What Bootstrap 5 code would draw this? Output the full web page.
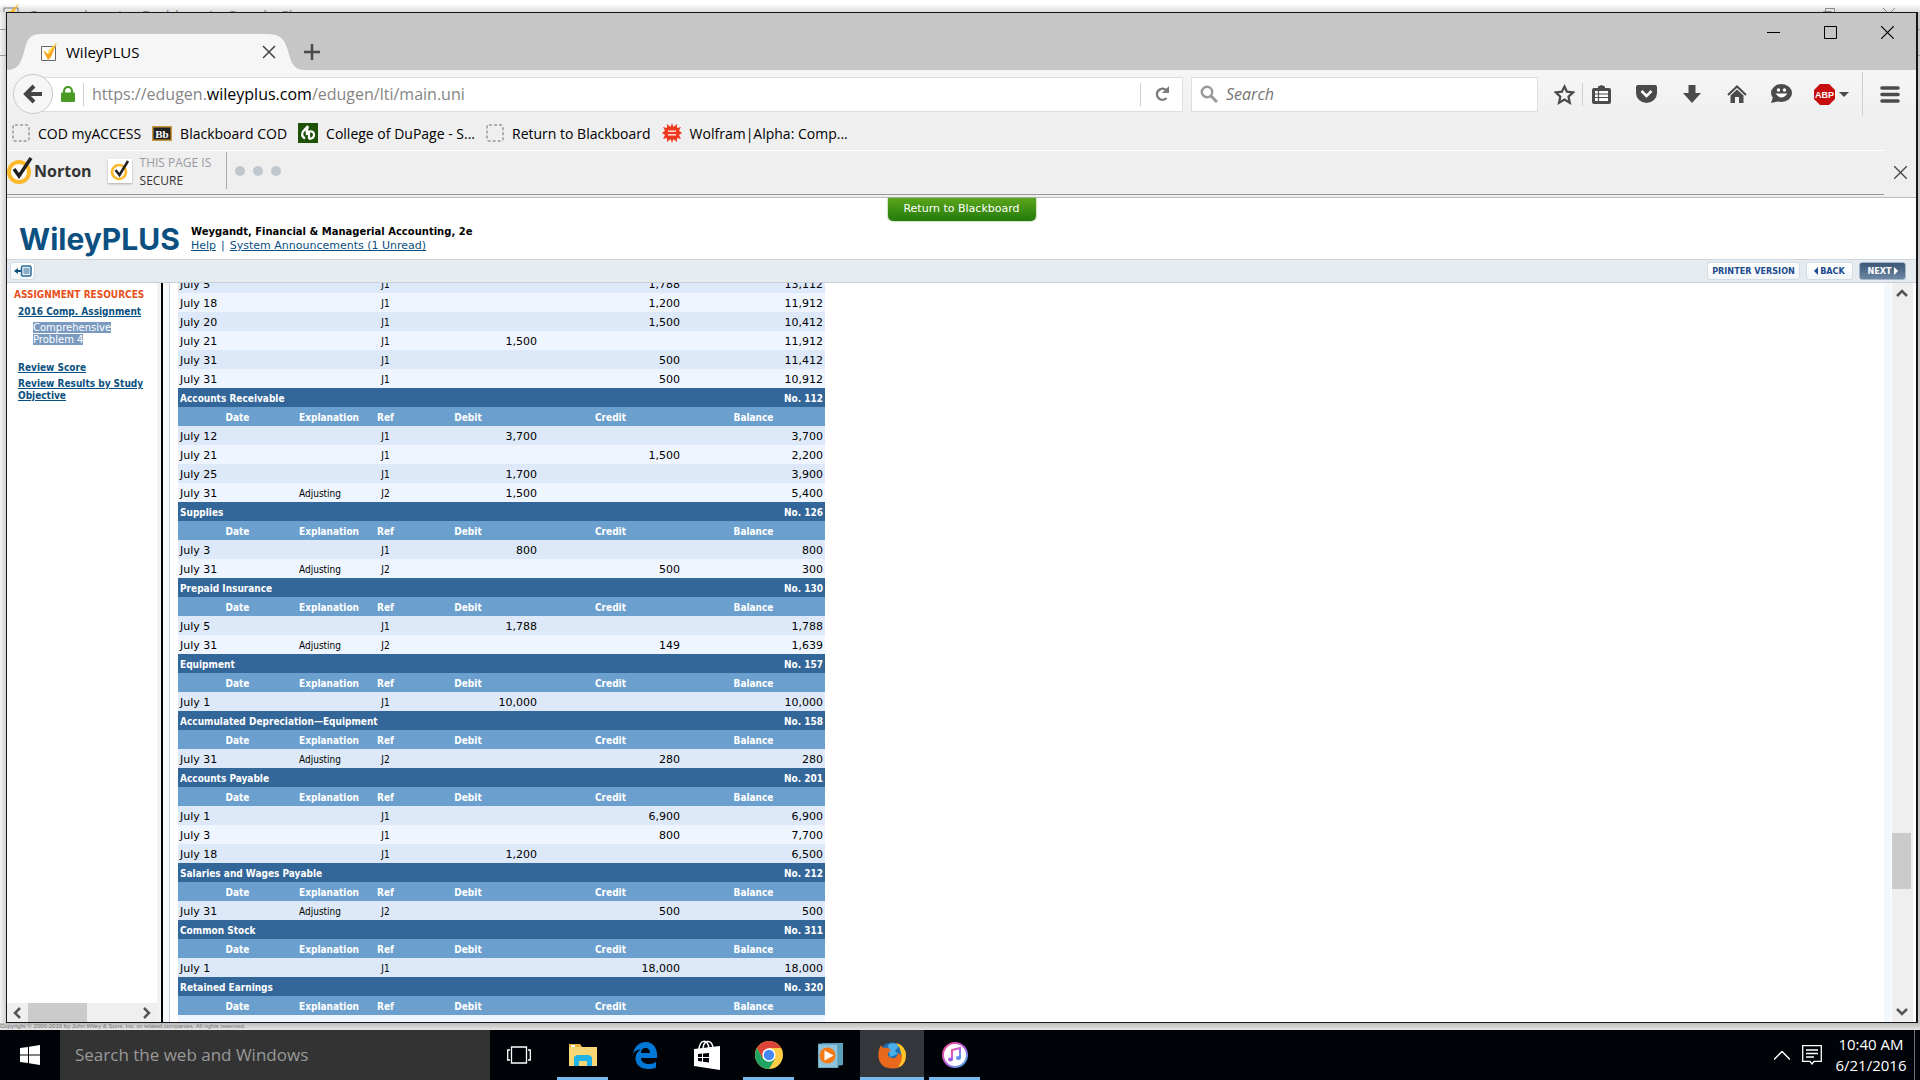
<!DOCTYPE html>
<html lang="en">
<head>
<meta charset="utf-8">
<title>WileyPLUS</title>
<meta name="viewport" content="width=device-width, initial-scale=1">
<link href="https://cdn.jsdelivr.net/npm/bootstrap@5.3.0/dist/css/bootstrap.min.css" rel="stylesheet">
<style>
:root{--ui:"Open Sans","Noto Sans",sans-serif;--pg:"DejaVu Sans",Verdana,sans-serif;--pgc:"DejaVu Sans Condensed","DejaVu Sans",sans-serif;}
html,body{height:100%;overflow:hidden}
body{font-family:var(--ui);background:#e3e3e3;color:#000}
button{padding:0;border:0;background:none;color:inherit;font:inherit;display:inline-flex;align-items:center;justify-content:center;flex:none}
input{border:0;background:transparent;outline:0;min-width:0}
svg{display:block;flex:none}
.desk{height:100vh}
.desk>*,.win>*{flex-shrink:0}
.desk>.mid,.win>.panes{flex:1 1 0;min-height:0}
.behind-title{height:12px;overflow:hidden;background:linear-gradient(#fff 30%,#dcdcdc);padding-left:3px;color:#888;font-size:15px;line-height:24px;gap:8px;padding-top:3px}
.behind-ctl{margin-left:auto;margin-right:25px;gap:48px;padding-top:5px}
.mid{padding:0 2px 0 6px;background:linear-gradient(#999,#999) 0 17px/100% 1px no-repeat,linear-gradient(#999,#999) 0 43px/100% 1px no-repeat,linear-gradient(90deg,#f4f4f4,#d2d2d2 6px,#c8c8c8)}
.win{border:1px solid #15151b;border-right-width:2px;background:#fff}
.titlebar{background:#c6c6c6;height:57px}
.tab-wrap{width:298px;height:36px}
.tab-wrap>svg{position:absolute;left:0;top:0}
.tab-in{position:relative;font-size:15px;padding:0 29px 0 29px;height:36px}
.plus{width:40px;height:36px;margin-left:-13px}
.winctl{margin-bottom:23px}
.winctl button{width:57px;height:30px}
.navrow{height:48px;background:linear-gradient(#f6f6f6,#efefef);padding-left:6px}
.back{width:40px;height:40px;border-radius:50%;border:1px solid #c9c9c9;background:#f6f6f6;margin-right:-12px;z-index:1}
.urlbox{height:35px;background:#fff;border:1px solid #dedede;padding-left:19px}
.vline{width:1px;height:23px;background:#cfcfcf;flex:none}
.urltext{font-size:16px;color:#858585;margin-left:8px}
.urltext b{font-weight:400;color:#000}
.searchbox{height:35px;width:347px;background:#fff;border:1px solid #dedede;margin-left:8px;padding-left:8px;gap:6px}
.searchbox input{font-size:16px;font-style:italic;width:280px;color:#555}
.searchbox input::placeholder{color:#757575;opacity:1}
.tools{padding-left:8px;width:378px;color:#4b4b4b}
.tools button{width:45px;height:30px}
.bm{height:32px;background:#efefef;padding:0 0 2px 5px;font-size:14px}
.bm a{color:#000;text-decoration:none;gap:8px;margin-right:11px;white-space:nowrap}
.norton{height:48px;background:#efefef;border-bottom:1px solid #bcbcbc;padding-bottom:2px}
.norton-in{height:45px;border-top:1px solid #fff;border-bottom:1px solid #999;padding-bottom:4px}
.nword{font-size:16px;font-weight:700;color:#333;line-height:24px}
.safe{font-size:12px;line-height:18px;color:#9a9aa2;width:86px;padding-top:2px}
.safe span{color:#333}
.shield{width:24px;height:24px;background:#fff;box-shadow:0 1px 2px #aaa}
.dot{width:10px;height:10px;border-radius:50%;background:#c0c8cf}
.vsep{width:1px;height:37px;background:#aaa}
.site-head{height:61px;padding-top:21px;font-family:var(--pg)}
.retbtn{left:0;right:0;top:0;margin:auto;width:148px;height:23px;background:linear-gradient(#5aa51b,#237a0c);color:#fff;font-size:11px;border-radius:0 0 5px 5px;box-shadow:0 0 2px #579a38;position:absolute}
.logo{font-family:Inter,"Open Sans",sans-serif;font-weight:700;font-size:30px;line-height:38px;color:#0b5080;width:176px}
.course{font-size:10px;line-height:14px}
.course a,.course{color:#000}
.links{font-size:11px}
.links,.links a{color:#0b5080}
.links{display:flex;gap:5px}
.sitebar{height:24px;background:#e6ebef;border-top:1px solid #cbd5e0;border-bottom:1px solid #c5cfdd;padding:0 10px 0 3px;gap:6px}
.sbtn{background:linear-gradient(#fff,#f3f6f8);border:1px solid #d3dce4;border-radius:3px;color:#1c4b8f;font:bold 9px var(--pgc);height:18px;gap:2px}
.sbtn.nx{background:linear-gradient(#3c5876,#6b87a3);color:#fff;border-color:#a5b6c8}
.side{width:150px;flex:none;font:bold 10px/12px var(--pgc)}
.side a{color:#0b5080;display:block;padding-left:11px}
.side h2{font:bold 10px/12px var(--pgc);color:#e8501a;margin:6px 0 5px 7px}
.side .picked{font:10px/12px var(--pg);padding-left:26px;width:115px;text-decoration:none;color:#fff}
.picked span{background:#7a9abf}
.hbar{height:19px;background:#efefef;color:#555;padding:0 6px}
.hbar i{width:59px;height:19px;background:#cbcbcb;margin-left:7px}
.vedge{width:9px;background:#f6f9fc;border-left:2px solid #000;border-right:1px solid #c5cfdd;flex:none}
.sedge{width:4px;background:#f2f2f2;flex:none}
.ledger-wrap{padding-left:8px;overflow:hidden}
.ledger{margin-top:-9px;width:647px;table-layout:fixed;border-collapse:collapse;font:11px/13px var(--pg)}
.ledger td,.ledger th{padding:4px 2px 2px;height:19px;white-space:nowrap}
.ledger th{font:bold 10px/13px var(--pgc);text-align:center;color:#fff}
.ledger td{text-align:right}
.ledger td:nth-child(1){text-align:left}
.ledger td:nth-child(2){text-align:left;font:10px/13px var(--pgc)}
.ledger th.ex{text-align:left}
.ledger td:nth-child(3){text-align:center;font:10px/13px var(--pgc)}
.ledger .acct{background:#336699}
.ledger .acct th:first-child{text-align:left}
.ledger .acct th:last-child{text-align:right}
.ledger .heads{background:#6b9fce}
.ledger .odd{background:#dde9f9}
.ledger .even{background:#eef5ff}
.vstrip{width:7px;background:#f3f8fd;margin-right:1px;flex:none}
.vbar{width:24px;background:#efefef;border-right:3px solid #fff;color:#555;flex:none;padding:6px 0}
.vbar i{width:19px;height:56px;background:#cbcbcb}
.under{height:7px;overflow:hidden;background:linear-gradient(#bdbdbd,#e6e6e6);font:6px/7px "Liberation Sans",sans-serif;color:#777}
.taskbar{height:50px;background:#000308;color:#fff}
.start{width:60px;height:50px}
.tsearch{width:430px;background:#333;padding-left:13px}
.tsearch input{font-size:17px;width:400px;color:#999}
.tsearch input::placeholder{color:#999;opacity:1}
.apps button{width:62px;height:50px;position:relative}
.apps .run::after{content:"";position:absolute;left:5px;right:6px;bottom:0;height:3px;background:#76b9ed}
.apps .act{background:#33373c}
.apps .act::after{left:0;right:0}
.clock{font-size:15px;line-height:21px;text-align:center;width:74px;margin-right:6px}
</style>
</head>
<body>
<div class="desk d-flex flex-column">
<div class="behind-title d-flex align-items-start">
<svg width="17" height="20" viewBox="0 0 17 20"><rect x="1" y="5" width="14" height="14" fill="none" stroke="#777"/><path d="M4 9l4 6 8-15-8 8z" fill="#f3b427"/></svg>
<span>Comprehensive Problem 4 - Google Chrome</span>
<div class="behind-ctl d-flex"><svg width="12" height="12" fill="none" stroke="#888"><path d="M.5 3.500h8v8h-8zM2.500 3v-2.500h9v8h-3"/></svg><svg width="12" height="12" stroke="#888"><path d="M0 0l12 12M12 0L0 12"/></svg></div>
</div>
<div class="mid d-flex">
<main class="win flex-fill d-flex flex-column overflow-hidden">
<div class="titlebar d-flex align-items-end">
<div class="tab-wrap position-relative">
<svg width="298" height="36"><path d="M0 36C14 36 15 24 18 14 21 4 24 0 34 0H260C272 0 277 4 280 14 284 25 284 36 298 36z" fill="#f6f6f6"/></svg>
<div class="tab-in d-flex align-items-center"><svg width="18" height="20" viewBox="0 0 18 20" class="me-2 ms-1"><path d="M1.500 4.500h14v14h-14z" fill="#fff" stroke="#666"/><path d="M3 8l5 4 9-12-6 15-3 3z" fill="#f9a51c"/><path d="M8 9l9-9-8 12z" fill="#ffd84d"/></svg><span class="flex-fill">WileyPLUS</span>
<button aria-label="Close tab"><svg width="14" height="14" stroke="#444" stroke-width="1.500"><path d="M1 1l12 12M13 1L1 13"/></svg></button></div>
</div>
<button class="plus" aria-label="New tab"><svg width="16" height="16" stroke="#4b4b4b" stroke-width="2.500"><path d="M8 0v16M0 8h16"/></svg></button>
<div class="winctl ms-auto d-flex"><button aria-label="Minimize"><svg width="13" height="13" stroke="#000"><path d="M0 6.500h13"/></svg></button><button aria-label="Maximize"><svg width="13" height="13" fill="none" stroke="#000"><path d="M.5.5h12v12H.5z"/></svg></button><button aria-label="Close"><svg width="13" height="13" stroke="#000" stroke-width="1.200"><path d="M0 0l13 13M13 0L0 13"/></svg></button></div>
</div>
<div class="navrow d-flex align-items-center">
<button class="back" aria-label="Back"><svg width="20" height="20" fill="none" stroke="#444" stroke-width="4"><path d="M19 10H4M11 2l-8 8 8 8"/></svg></button>
<div class="urlbox flex-fill d-flex align-items-center">
<svg width="14" height="16"><rect y="6.500" width="14" height="9.500" rx="1" fill="#4a9b26"/><path d="M3 8V5a4 4 0 0 1 8 0v3" fill="none" stroke="#4a9b26" stroke-width="2.200"/></svg>
<span class="vline ms-2"></span><span class="urltext flex-fill">https://edugen.<b>wileyplus.com</b>/edugen/lti/main.uni</span>
<span class="vline"></span><button style="width:41px" aria-label="Reload"><svg width="16" height="16" fill="none" stroke="#7a7a7a" stroke-width="2.500"><path d="M12.500 12A5.500 5.500 0 1 1 12 4"/><path d="M15 0v7H8z" fill="#7a7a7a" stroke="none"/></svg></button>
</div>
<label class="searchbox d-flex align-items-center"><svg width="18" height="18" fill="none" stroke="#999" stroke-width="2.500"><circle cx="7" cy="7" r="5.200"/><path d="M11 11l6 6" stroke-width="3"/></svg><input type="text" placeholder="Search" aria-label="Search"></label>
<div class="tools d-flex align-items-center">
<button style="width:36px" aria-label="Bookmark"><svg width="21" height="21" viewBox="0 0 21 21" fill="none" stroke="#4b4b4b" stroke-width="2.200"><path d="M10.500 2.500l2.400 5.200 6.200.7-4.600 4.200 1.300 6.200-5.300-3.200L5 18.800l1.300-6.200L1.700 8.400l6.200-.7z"/></svg></button><span class="vline"></span>
<button style="width:37px" aria-label="Library"><svg width="19" height="19"><path d="M2 3h4V1.500L9.500 0 13 1.500V3h4a2 2 0 0 1 2 2v12a2 2 0 0 1-2 2H2a2 2 0 0 1-2-2V5a2 2 0 0 1 2-2z" fill="#4b4b4b"/><path d="M3 6h13v10H3z" fill="#fff"/><path d="M3 9h13M3 12.500h13M6.500 6v10" stroke="#4b4b4b" stroke-width="1.200"/></svg></button>
<button style="width:53px" aria-label="Pocket"><svg width="21" height="18"><path d="M2 0h17a2 2 0 0 1 2 2v6a10.500 10 0 0 1-21 0V2a2 2 0 0 1 2-2z" fill="#4b4b4b"/><path d="M5.500 6l5 5 5-5" fill="none" stroke="#fff" stroke-width="2.500"/></svg></button>
<button style="width:37px" aria-label="Downloads"><svg width="18" height="18"><path d="M5.500 0h7v8H18l-9 10L0 8h5.500z" fill="#4b4b4b"/></svg></button>
<button style="width:53px" aria-label="Home"><svg width="20" height="18"><path d="M1 10L10 1.500 19 10" fill="none" stroke="#4b4b4b" stroke-width="2"/><path d="M3.500 10.500L10 4.500l6.500 6V18H12v-6H8v6H3.500z" fill="#4b4b4b"/></svg></button>
<button style="width:37px" aria-label="Hello"><svg width="21" height="20"><ellipse cx="10.500" cy="9" rx="10.500" ry="9" fill="#4b4b4b"/><path d="M2 13L0 19l9-2z" fill="#4b4b4b"/><circle cx="7.500" cy="6" r="1.700" fill="#fff"/><circle cx="13.500" cy="6" r="1.700" fill="#fff"/><path d="M4.500 9.500q6 8 12 0" fill="#fff"/></svg></button>
<button style="width:62px;gap:4px" aria-label="Adblock Plus"><svg width="21" height="21"><path d="M6 0h9l6 6v9l-6 6H6l-6-6V6z" fill="#c70d0d"/><text x="10.500" y="14" font-size="9" font-weight="700" font-family="Liberation Sans" fill="#fff" text-anchor="middle">ABP</text></svg><svg width="10" height="5"><path d="M0 0h10L5 5z" fill="#4b4b4b"/></svg></button>
<span class="vline" style="height:44px"></span>
<button aria-label="Menu" class="ms-1"><svg width="20" height="17"><path d="M2 2h16M2 8.500h16M2 15h16" stroke="#4b4b4b" stroke-width="3.600" stroke-linecap="round"/></svg></button>
</div>
</div>
<nav class="bm d-flex align-items-center">
<a href="#" class="d-flex align-items-center"><svg width="18" height="18"><rect x="1" y="1" width="16" height="16" rx="2" fill="none" stroke="#999" stroke-width="1.500" stroke-dasharray="3 2"/></svg>COD myACCESS</a>
<a href="#" class="d-flex align-items-center"><svg width="20" height="15"><rect x=".75" y=".75" width="18.500" height="13.500" fill="#222" stroke="#c9963c" stroke-width="1.500"/><text x="10" y="11.500" font-size="11" font-weight="700" font-family="Liberation Serif" fill="#fff" text-anchor="middle">Bb</text></svg>Blackboard COD</a>
<a href="#" class="d-flex align-items-center"><svg width="20" height="20"><path d="M0 0h20v20H0z" fill="#1d5207"/><path d="M10 3L5 8.500q-2.500 4 2 7M10 3q-2 5-1 9M11 16V8.500q5-1 5 3.500 0 3.500-5 4" fill="none" stroke="#fff" stroke-width="2.200"/></svg>College of DuPage - S...</a>
<a href="#" class="d-flex align-items-center"><svg width="18" height="18"><rect x="1" y="1" width="16" height="16" rx="2" fill="none" stroke="#999" stroke-width="1.500" stroke-dasharray="3 2"/></svg>Return to Blackboard</a>
<a href="#" class="d-flex align-items-center"><svg width="20" height="20" viewBox="-10 -10 20 20"><path d="M0-10l1.500 4L5-9l0 4 4-1-2 3.500L10 0 7 2l2 4-4-1 0 4-3.500-3L0 10l-1.500-4L-5 9l0-4-4 1 2-4L-10 0l3-2.500L-9-6l4 1 0-4 3.500 3z" fill="#ee3a1c"/><path d="M-4-1.800h8M-4 1.800h8" stroke="#fff" stroke-width="1.200"/></svg>Wolfram|Alpha: Comp...</a>
</nav>
<div class="norton d-flex">
<div class="norton-in d-flex align-items-center flex-fill">
<svg width="27" height="28"><circle cx="12" cy="15" r="10" fill="#fff" stroke="#fdb92b" stroke-width="4"/><path d="M7 12l5 7L24 1" fill="none" stroke="#222" stroke-width="3.500"/></svg><span class="nword">Norton</span>
<span class="shield d-flex align-items-center justify-content-center ms-3"><svg width="20" height="21"><circle cx="9" cy="12" r="7" fill="none" stroke="#fdb92b" stroke-width="2.600"/><path d="M5.500 10l4 5L18 1" fill="none" stroke="#222" stroke-width="2.500"/></svg></span>
<div class="safe ms-2">THIS PAGE IS<br><span>SECURE</span></div><span class="vsep"></span>
<span class="d-flex gap-1 ms-2"><i class="dot"></i><i class="dot ms-1"></i><i class="dot ms-1"></i></span>
</div>
<button style="width:32px" aria-label="Close toolbar"><svg width="13" height="13" stroke="#444" stroke-width="1.300"><path d="M0 0l13 13M13 0L0 13"/></svg></button>
</div>
<header class="site-head position-relative d-flex align-items-center">
<button class="retbtn">Return to Blackboard</button>
<div class="logo ms-2 ps-1">WileyPLUS</div>
<div class="course"><b>Weygandt, Financial &amp; Managerial Accounting, 2e</b><div class="links"><a href="#">Help</a><span>|</span><a href="#">System Announcements (1 Unread)</a></div></div>
</header>
<div class="sitebar d-flex align-items-center">
<button class="sbtn me-auto" style="width:25px" aria-label="Hide menu"><svg width="18" height="12"><path d="M0 6l4-3v2h3v2H4v2z" fill="#0b5080"/><rect x="7.500" y="1" width="9.500" height="10" rx="1.500" fill="#e8f0f6" stroke="#2a6a97" stroke-width="1.500"/><path d="M9.500 4h6M9.500 6h6M9.500 8h6" stroke="#2a6a97"/></svg></button>
<button class="sbtn" style="width:93px">PRINTER VERSION</button>
<button class="sbtn" style="width:47px"><svg width="4" height="8"><path d="M4 0v8L0 4z" fill="#1c4b8f"/></svg>BACK</button>
<button class="sbtn nx" style="width:47px">NEXT<svg width="4" height="8"><path d="M0 0v8l4-4z" fill="#fff"/></svg></button>
</div>
<div class="panes d-flex">
<aside class="side d-flex flex-column">
<h2>ASSIGNMENT RESOURCES</h2>
<a href="#">2016 Comp. Assignment</a>
<a href="#" class="picked mt-1"><span>Comprehensive Problem 4</span></a>
<a href="#" class="mt-3">Review Score</a>
<a href="#" class="mt-1 pe-1">Review Results by Study Objective</a>
<div class="hbar mt-auto d-flex align-items-center"><svg width="8" height="12" fill="none" stroke="#555" stroke-width="2.500"><path d="M7 1L2 6l5 5"/></svg><i></i><svg width="8" height="12" class="ms-auto" fill="none" stroke="#555" stroke-width="2.500"><path d="M1 1l5 5-5 5"/></svg></div>
</aside>
<div class="sedge"></div>
<div class="vedge"></div>
<div class="ledger-wrap flex-fill">
<table class="ledger"><colgroup><col style="width:119px"><col style="width:77px"><col style="width:23px"><col style="width:142px"><col style="width:143px"><col style="width:143px"></colgroup><tbody id="rows"></tbody></table>
</div>
<div class="vstrip"></div>
<div class="vbar d-flex flex-column"><svg width="12" height="8" class="ms-1" fill="none" stroke="#555" stroke-width="2.500"><path d="M1 7l5-5 5 5"/></svg><i style="margin-top:536px"></i><svg width="12" height="8" class="ms-1 mt-auto" fill="none" stroke="#555" stroke-width="2.500"><path d="M1 1l5 5 5-5"/></svg></div>
</div>
</main>
</div>
<div class="under">Copyright © 2000-2016 by John Wiley &amp; Sons, Inc. or related companies. All rights reserved.</div>
<footer class="taskbar d-flex align-items-stretch">
<button class="start" aria-label="Start"><svg width="20" height="20" fill="#fff"><path d="M0 3l8-1v7.500H0zM9 1.800L20 0v9.500H9zM0 10.500h8V18l-8-1zM9 10.500h11V20L9 18.200z"/></svg></button>
<label class="tsearch d-flex align-items-center"><input type="text" placeholder="Search the web and Windows" aria-label="Search the web and Windows"></label>
<div class="apps d-flex">
<button style="width:58px" aria-label="Task view"><svg width="24" height="18" fill="none" stroke="#fff" stroke-width="1.300"><path d="M4.500 1h15v16h-15zM3 4H.7v10H3M21 4h2.300v10H21"/></svg></button>
<button class="run ms-1" aria-label="File Explorer"><svg width="28" height="24"><path d="M0 1h11l2 3h15v19H0z" fill="#f8d775"/><path d="M0 1h11l1 3H0z" fill="#e8b33a"/><path d="M2 2h4v2H2z" fill="#fff"/><path d="M5 23V14l3-2h12l3 2v9h-5v-5h-8v5z" fill="#1fb3ea"/></svg></button>
<button aria-label="Edge"><svg width="24" height="27" viewBox="0 0 24 27"><path d="M0 12C1 5 6 0 12.500 0 20 0 24 6 24 12.500V16H8c0 4 4 6 8 6 3 0 5-.7 7-2v5.500c-2 1-5 1.500-8 1.500C7 27 2.500 22 2.500 16.500 2.500 12 5 9 8 7.500 4 7.500 1.500 9 0 12zM8 11h9c0-3-1.500-5-4.500-5S8 8 8 11z" fill="#0078d7"/></svg></button>
<button aria-label="Store"><svg width="26" height="30"><path d="M0 9l26-3v24L0 26z" fill="#fff"/><path d="M5 9C6 0 13-2 15 8M9 8c1-8 8-9 10-1" fill="none" stroke="#fff" stroke-width="1.500"/><path d="M4 14l4-.4V17H4zM9 13.500l6-.5v4H9zM4 18h4v3.600L4 21zM9 18h6v4.500l-6-.7z" fill="#000308"/></svg></button>
<button class="run" aria-label="Chrome"><svg width="28" height="28" viewBox="-14 -14 28 28"><circle r="14" fill="#fc4"/><path d="M-12.100-7A14 14 0 0 1 12.100-7H0L-6 4z" fill="#dc4437"/><path d="M-12.100-7A14 14 0 0 0 0 14L6 4H-6z" fill="#1ea362"/><circle r="6.700" fill="#fff"/><circle r="5.200" fill="#4688f1"/></svg></button>
<button style="width:60px" aria-label="Media Player"><svg width="25" height="25"><path d="M4 0h21v22l-21 3z" fill="#5ba2bd"/><path d="M0 1h20v24H0z" fill="#8fc3dc" stroke="#4f8fae"/><circle cx="9.500" cy="12.500" r="8" fill="#f47a16"/><path d="M6.500 7.500l9 5-9 5z" fill="#fff"/></svg></button>
<button class="run act" style="width:64px" aria-label="Firefox"><svg width="28" height="28" viewBox="0 0 28 28"><circle cx="14" cy="14" r="12.500" fill="#1b6fb5"/><path d="M10 4q6-4 11 1l-4 5 3 3-8 3z" fill="#49b1e8"/><path d="M3 4l2 3q3-1 5 0l3 2-3 3q-1 4 4 5 5 1 6-5l3 2q0-8-5-12 9 2 10 12 0 13-13 13.500Q2 27.500.5 16 0 9 3 4z" fill="#e8681c"/><path d="M18 2q9 2 10 12-.5 10-8 12.500 6-9 3-15-1-6-5-9.500z" fill="#fcc62b"/></svg></button>
<button class="run" aria-label="iTunes"><svg width="26" height="26"><defs><linearGradient id="g" x2="1" y2="1"><stop stop-color="#f0508c"/><stop offset=".5" stop-color="#c05ce0"/><stop offset="1" stop-color="#32b8f0"/></linearGradient></defs><circle cx="13" cy="13" r="12" fill="#fff" stroke="url(#g)" stroke-width="2"/><path d="M10 17V8l8-2v10" fill="none" stroke="url(#g)" stroke-width="2"/><ellipse cx="8.500" cy="17.500" rx="2.500" ry="2" fill="#a05ce8"/><ellipse cx="16.500" cy="16" rx="2.500" ry="2" fill="#5a8cf0"/></svg></button>
</div>
<div class="ms-auto d-flex align-items-center">
<button aria-label="Show hidden icons"><svg width="16" height="9" fill="none" stroke="#fff" stroke-width="1.500"><path d="M0 8.500l8-8 8 8"/></svg></button>
<button class="ms-2 ps-1 me-2" aria-label="Notifications"><svg width="20" height="20" fill="none" stroke="#fff" stroke-width="1.300"><path d="M.7.7h18.600v15.600H12L10 19l-2-2.700H.7zM4 5h12M4 8.500h12M4 12h8"/></svg></button>
<div class="clock ms-1">10:40 AM<br>6/21/2016</div>
<span style="width:1px;height:50px" class="bg-secondary"></span><span style="width:5px"></span>
</div>
</footer>
</div>
<script>
const data = [
 [null,null,[["July 5","","J1","","1,788","13,112"],["July 18","","J1","","1,200","11,912"],["July 20","","J1","","1,500","10,412"],["July 21","","J1","1,500","","11,912"],["July 31","","J1","","500","11,412"],["July 31","","J1","","500","10,912"]]],
 ["Accounts Receivable","112",[["July 12","","J1","3,700","","3,700"],["July 21","","J1","","1,500","2,200"],["July 25","","J1","1,700","","3,900"],["July 31","Adjusting","J2","1,500","","5,400"]]],
 ["Supplies","126",[["July 3","","J1","800","","800"],["July 31","Adjusting","J2","","500","300"]]],
 ["Prepaid Insurance","130",[["July 5","","J1","1,788","","1,788"],["July 31","Adjusting","J2","","149","1,639"]]],
 ["Equipment","157",[["July 1","","J1","10,000","","10,000"]]],
 ["Accumulated Depreciation—Equipment","158",[["July 31","Adjusting","J2","","280","280"]]],
 ["Accounts Payable","201",[["July 1","","J1","","6,900","6,900"],["July 3","","J1","","800","7,700"],["July 18","","J1","1,200","","6,500"]]],
 ["Salaries and Wages Payable","212",[["July 31","Adjusting","J2","","500","500"]]],
 ["Common Stock","311",[["July 1","","J1","","18,000","18,000"]]],
 ["Retained Earnings","320",[["","","","","",""]]]
];
let html = "";
for (const [name, no, rows] of data) {
  if (name) html += `<tr class="acct"><th colspan="4">${name}</th><th colspan="2">No. ${no}</th></tr><tr class="heads"><th>Date</th><th class="ex">Explanation</th><th>Ref</th><th>Debit</th><th>Credit</th><th>Balance</th></tr>`;
  rows.forEach((r, i) => {
    const odd = name === "Retained Earnings" ? "even" : i % 2 ? "even" : "odd";
    html += `<tr class="${odd}">` + r.map(c => `<td>${c}</td>`).join("") + "</tr>";
  });
}
document.getElementById("rows").innerHTML = html;
</script>
<script src="https://cdn.jsdelivr.net/npm/bootstrap@5.3.0/dist/js/bootstrap.bundle.min.js"></script>
</body>
</html>
